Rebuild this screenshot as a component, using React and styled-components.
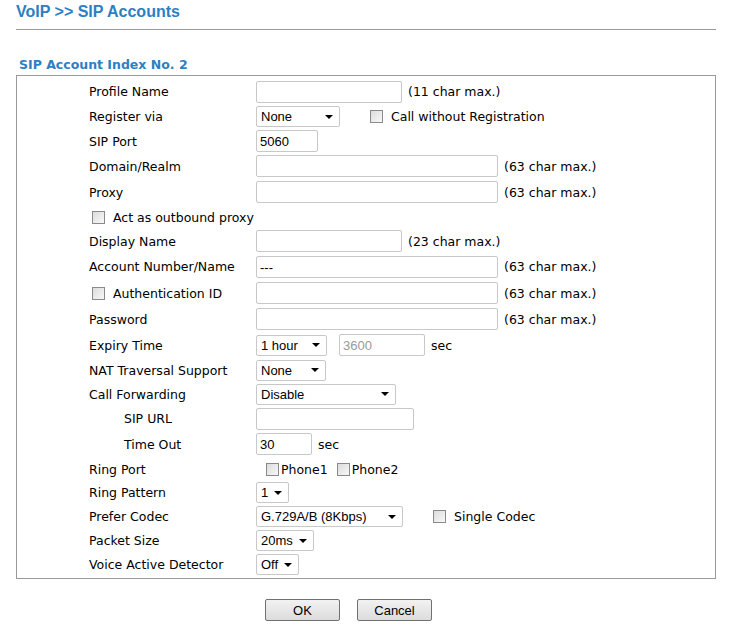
import React from "react";
import styled, { createGlobalStyle } from "styled-components";

const Global = createGlobalStyle`
  body { margin: 0; background: #fff; font-family: "DejaVu Sans", Verdana, sans-serif; }
`;

const Page = styled.div`
  width: 700px;
  padding: 3px 0 0 16px;
`;

const Title = styled.div`
  font-family: "Liberation Sans", Arial, sans-serif;
  font-weight: bold;
  font-size: 16px;
  color: #2b80c5;
  height: 22px;
  border-bottom: 1px solid #999;
  padding-bottom: 4px;
`;

const Sub = styled.div`
  margin-top: 27px;
  font-size: 12.5px;
  font-weight: bold;
  color: #2b80c5;
  padding-left: 3px;
  height: 18px;
`;

const Box = styled.div`
  border: 1px solid #999;
  padding: 3px 0 1px 0;
`;

const Row = styled.div`
  display: flex;
  align-items: center;
  height: ${(p) => p.h}px;
`;

const Label = styled.div`
  width: ${(p) => 167 - (p.indent || 0)}px;
  margin-left: ${(p) => 72 + (p.indent || 0)}px;
  font-size: 12.5px;
  color: #000;
  display: flex;
  align-items: center;
  white-space: nowrap;
`;

const Check = styled.span`
  display: inline-block;
  width: 11px;
  height: 11px;
  border: 1px solid #8a8a8a;
  background: linear-gradient(135deg, #dcdcdc, #f8f8f8);
  margin: 0 ${(p) => p.gap || 8}px 0 ${(p) => p.left || 0}px;
  flex-shrink: 0;
`;

const Input = styled.div`
  box-sizing: border-box;
  width: ${(p) => p.w}px;
  height: 22px;
  border: 1px solid #c8c8c8;
  border-radius: 2px;
  font-family: "Liberation Sans", Arial, sans-serif;
  font-size: 13px;
  color: ${(p) => (p.disabled ? "#999" : "#000")};
  padding: 3px 3px;
  margin-left: ${(p) => p.ml || 0}px;
`;

const SelectBox = styled.div`
  box-sizing: border-box;
  width: ${(p) => p.w}px;
  height: 21px;
  border: 1px solid #c8c8c8;
  border-radius: 2px;
  font-family: "Liberation Sans", Arial, sans-serif;
  font-size: 13px;
  padding: 0 6px 0 4px;
  display: flex;
  align-items: center;
  justify-content: space-between;
  &::after {
    content: "";
    border-left: 4px solid transparent;
    border-right: 4px solid transparent;
    border-top: 4px solid #000;
  }
`;

const Note = styled.span`
  font-size: 12.5px;
  margin-left: ${(p) => p.ml || 6}px;
  display: flex;
  align-items: center;
`;

const Buttons = styled.div`
  display: flex;
  justify-content: center;
  gap: 17px;
  margin-top: 20px;
  padding-right: 35px;
`;

const Button = styled.div`
  width: 73px;
  height: 20px;
  border: 1px solid #707070;
  border-radius: 2px;
  background: linear-gradient(#f2f2f2, #dcdcdc);
  font-family: "Liberation Sans", Arial, sans-serif;
  font-size: 13px;
  display: flex;
  align-items: center;
  justify-content: center;
`;

const Select = ({ w, children }) => <SelectBox w={w}><span>{children}</span></SelectBox>;

export default function App() {
  return (
    <Page>
      <Global />
      <Title>VoIP &gt;&gt; SIP Accounts</Title>
      <Sub>SIP Account Index No. 2</Sub>
      <Box>
        <Row h={25}><Label>Profile Name</Label><Input w={146} /><Note>(11 char max.)</Note></Row>
        <Row h={25}><Label>Register via</Label><Select w={84}>None</Select><Note ml={30}><Check />Call without Registration</Note></Row>
        <Row h={24}><Label>SIP Port</Label><Input w={62}>5060</Input></Row>
        <Row h={26}><Label>Domain/Realm</Label><Input w={242} /><Note>(63 char max.)</Note></Row>
        <Row h={26}><Label>Proxy</Label><Input w={242} /><Note>(63 char max.)</Note></Row>
        <Row h={24}><Label indent={3}><Check />Act as outbound proxy</Label></Row>
        <Row h={24}><Label>Display Name</Label><Input w={146} /><Note>(23 char max.)</Note></Row>
        <Row h={27}><Label>Account Number/Name</Label><Input w={242}>---</Input><Note>(63 char max.)</Note></Row>
        <Row h={26}><Label indent={3}><Check />Authentication ID</Label><Input w={242} /><Note>(63 char max.)</Note></Row>
        <Row h={26}><Label>Password</Label><Input w={242} /><Note>(63 char max.)</Note></Row>
        <Row h={26}><Label>Expiry Time</Label><Select w={71}>1 hour</Select><Input w={86} ml={12} disabled>3600</Input><Note>sec</Note></Row>
        <Row h={24}><Label>NAT Traversal Support</Label><Select w={70}>None</Select></Row>
        <Row h={24}><Label>Call Forwarding</Label><Select w={140}>Disable</Select></Row>
        <Row h={25}><Label indent={35}>SIP URL</Label><Input w={158} /></Row>
        <Row h={26}><Label indent={35}>Time Out</Label><Input w={56}>30</Input><Note>sec</Note></Row>
        <Row h={24}><Label>Ring Port</Label><Note ml={0}><Check left={4} gap={2} />Phone1<Check left={9} gap={2} />Phone2</Note></Row>
        <Row h={23}><Label>Ring Pattern</Label><Select w={33}>1</Select></Row>
        <Row h={25}><Label>Prefer Codec</Label><Select w={147}>G.729A/B (8Kbps)</Select><Note ml={30}><Check />Single Codec</Note></Row>
        <Row h={23}><Label>Packet Size</Label><Select w={58}>20ms</Select></Row>
        <Row h={25}><Label>Voice Active Detector</Label><Select w={43}>Off</Select></Row>
      </Box>
      <Buttons>
        <Button>OK</Button>
        <Button>Cancel</Button>
      </Buttons>
    </Page>
  );
}
